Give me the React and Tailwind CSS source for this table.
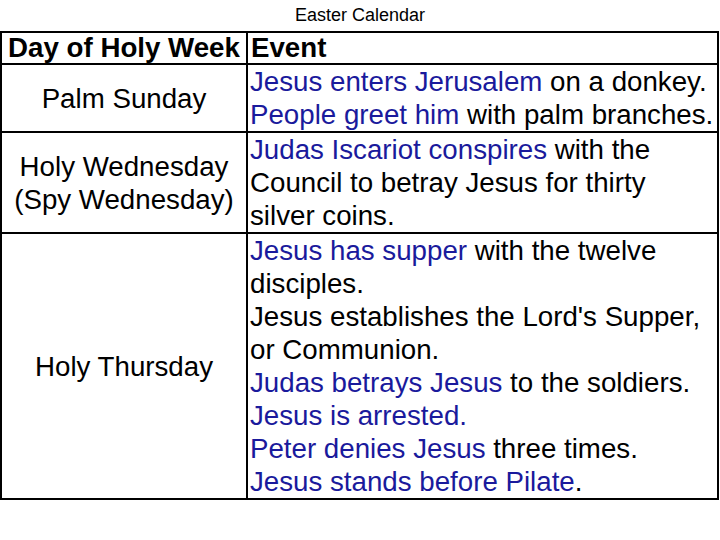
import React from "react";

const B = ({ children }) => <span className="text-[#1a1a9c]">{children}</span>;

export default function App() {
  return (
    <div className="w-[720px] h-[540px] bg-white text-black" style={{ fontFamily: '"Liberation Sans", Arial, sans-serif' }}>
      <div className="h-[31px] leading-[30px] text-center text-[18px]">Easter Calendar</div>
      <div className="grid grid-cols-[246px_1fr] w-[719px] border-2 border-black text-[27.7px] leading-[33px]">
        <div className="border-r-2 border-b-2 border-black font-bold text-center leading-[30px]">Day of Holy Week</div>
        <div className="border-b-2 border-black font-bold pl-[3px] leading-[30px]">Event</div>

        <div className="border-r-2 border-b-2 border-black flex items-center justify-center text-center">Palm Sunday</div>
        <div className="border-b-2 border-black pl-[2px] whitespace-nowrap">
          <div><B>Jesus enters Jerusalem</B> on a donkey.</div>
          <div><B>People greet him</B> with palm branches.</div>
        </div>

        <div className="border-r-2 border-b-2 border-black flex items-center justify-center text-center">
          <div>Holy Wednesday<br />(Spy Wednesday)</div>
        </div>
        <div className="border-b-2 border-black pl-[2px] whitespace-nowrap">
          <div><B>Judas Iscariot conspires</B> with the</div>
          <div>Council to betray Jesus for thirty</div>
          <div>silver coins.</div>
        </div>

        <div className="border-r-2 border-black flex items-center justify-center text-center">Holy Thursday</div>
        <div className="pl-[2px] whitespace-nowrap">
          <div><B>Jesus has supper</B> with the twelve</div>
          <div>disciples.</div>
          <div>Jesus establishes the Lord's Supper,</div>
          <div>or Communion.</div>
          <div><B>Judas betrays Jesus</B> to the soldiers.</div>
          <div><B>Jesus is arrested.</B></div>
          <div><B>Peter denies Jesus</B> three times.</div>
          <div><B>Jesus stands before Pilate</B>.</div>
        </div>
      </div>
    </div>
  );
}
